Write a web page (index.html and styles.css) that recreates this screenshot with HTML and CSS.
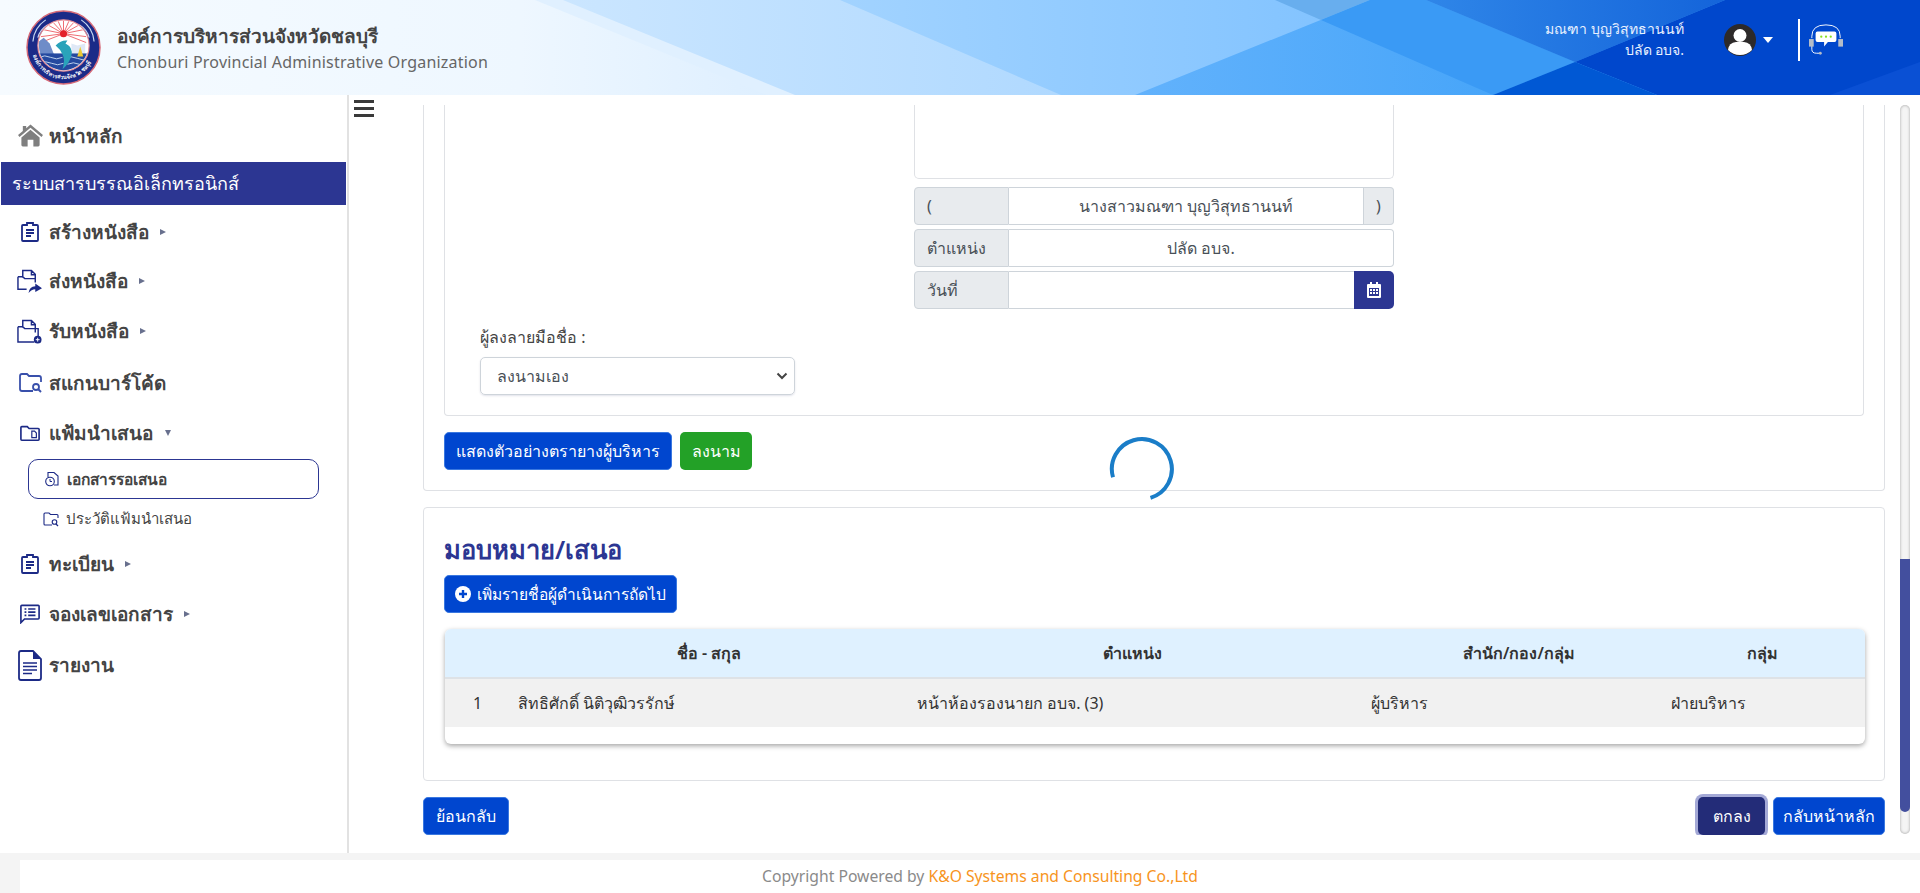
FILE: index.html
```html
<!DOCTYPE html>
<html lang="th">
<head>
<meta charset="utf-8">
<title>ระบบสารบรรณอิเล็กทรอนิกส์</title>
<link rel="stylesheet" href="styles.css">
</head>
<body>
<header class="topbar">
  <svg class="topbar-bg" viewBox="0 0 1920 95" preserveAspectRatio="none" aria-hidden="true">
    <defs>
      <linearGradient id="g0" gradientUnits="userSpaceOnUse" x1="0" x2="800" y1="0" y2="0">
        <stop offset="0" stop-color="#f6fbff"/>
        <stop offset="0.65" stop-color="#eef7ff"/>
        <stop offset="1" stop-color="#dceeff"/>
      </linearGradient>
      <linearGradient id="g1" gradientUnits="userSpaceOnUse" x1="560" x2="1060" y1="0" y2="0">
        <stop offset="0" stop-color="#cbe6ff"/>
        <stop offset="1" stop-color="#b0d9ff"/>
      </linearGradient>
      <linearGradient id="g2" gradientUnits="userSpaceOnUse" x1="840" x2="1370" y1="0" y2="0">
        <stop offset="0" stop-color="#a2d3ff"/>
        <stop offset="1" stop-color="#80c2ff"/>
      </linearGradient>
      <linearGradient id="g3" gradientUnits="userSpaceOnUse" x1="1135" x2="1500" y1="0" y2="0">
        <stop offset="0" stop-color="#62b2fc"/>
        <stop offset="1" stop-color="#47a5f9"/>
      </linearGradient>
      <linearGradient id="g4" gradientUnits="userSpaceOnUse" x1="1426" x2="1725" y1="0" y2="0">
        <stop offset="0" stop-color="#2f86e8"/>
        <stop offset="1" stop-color="#1464da"/>
      </linearGradient>
    </defs>
    <rect width="1920" height="95" fill="url(#g0)"/>
    <polygon points="535,0 1920,0 1920,95 767,95" fill="#e0f0ff"/>
    <polygon points="563,0 1920,0 1920,95 795,95" fill="url(#g1)"/>
    <polygon points="840,0 1920,0 1920,95 1061,95" fill="url(#g2)"/>
    <polygon points="1370,0 1920,0 1920,95 1135,95" fill="url(#g3)"/>
    <polygon points="1275,0 1370,0 1321,20" fill="#68aeee"/>
    <polygon points="1370,0 1426,0 1575,62 1493,95 1321,20" fill="#3a9af5"/>
    <polygon points="1426,0 1725,0 1575,62" fill="url(#g4)"/>
    <polygon points="1725,0 1920,0 1920,95 1657,95 1575,62" fill="#0047cc"/>
    <polygon points="1575,62 1657,95 1493,95" fill="#0058d4"/>
    <polygon points="1830,95 1920,62 1920,95" fill="#0a50d4"/>
  </svg>
  <div class="brand">
    <svg class="logo" viewBox="0 0 76 76" aria-hidden="true">
      <defs>
        <clipPath id="logoInner"><circle cx="38" cy="36" r="25"/></clipPath>
        <path id="logoArc" d="M7 44 A31.500 31.500 0 0 0 69 44"/>
      </defs>
      <circle cx="38" cy="38" r="37" fill="#1b2b88" stroke="#d66a78" stroke-width="1.500"/>
      <path d="M7 32 Q8 18 20 10 M12 28 Q14 20 22 15 M69 32 Q68 18 56 10 M64 28 Q62 20 54 15" fill="none" stroke="#c9d9f2" stroke-width="1.200"/>
      <circle cx="38" cy="36" r="26" fill="#fff" stroke="#e58c96" stroke-width="1.200"/>
      <g clip-path="url(#logoInner)">
        <path d="M38 24 L38 10 M38 24 L32 10 M38 24 L44 10 M38 24 L27 12 M38 24 L49 12 M38 24 L22 15 M38 24 L54 15 M38 24 L18 20 M38 24 L58 20 M38 24 L15 27 M38 24 L61 27 M38 24 L15 33 M38 24 L61 33" stroke="#ec5a62" stroke-width="0.900"/>
        <circle cx="38" cy="24" r="3.600" fill="#e3202a"/>
        <path d="M10 34 L18 28 L24 34 L28 44 L28 62 L10 62Z" fill="#6f8cc8"/>
        <path d="M46 34 L52 36 L60 34 L60 44 L46 44Z" fill="#dfe8f6"/>
        <rect x="10" y="44" width="56" height="20" fill="#25499f"/>
        <path d="M13 48 Q19 45 25 48 T37 48 M40 49 Q46 46 52 49 T63 49 M14 54 Q20 51 26 54 T38 54 M42 55 Q48 52 54 55 T62 55" fill="none" stroke="#cfe0f6" stroke-width="0.900"/>
        <path d="M52 47 L55 37 L58 47Z" fill="#ecc934"/>
        <path d="M30 36 Q36 30 42 31 L40 34 Q48 38 46 46 Q44 54 37 60 Q40 50 37 45 Q35 40 30 36Z" fill="#2aa3ba"/>
      </g>
      <text class="logo-ring" fill="#fff"><textPath href="#logoArc" startOffset="2%">องค์การบริหารส่วนจังหวัดชลบุรี</textPath></text>
    </svg>
    <div class="brand-text">
      <div class="brand-th">องค์การบริหารส่วนจังหวัดชลบุรี</div>
      <div class="brand-en">Chonburi Provincial Administrative Organization</div>
    </div>
  </div>
  <div class="userbox">
    <div class="user-text">
      <div>มณฑา บุญวิสุทธานนท์</div>
      <div>ปลัด อบจ.</div>
    </div>
    <svg class="avatar" viewBox="0 0 32 32" aria-hidden="true">
      <circle cx="16" cy="16" r="16" fill="#2d2a2a"/>
      <circle cx="16" cy="11.500" r="6.500" fill="#fff"/>
      <path d="M4 26 Q5 18.500 12 18 L20 18 Q27 18.500 28 26 Q23 31 16 31 Q9 31 4 26Z" fill="#fff"/>
    </svg>
    <span class="caret"></span>
    <span class="divider"></span>
    <svg class="chat" viewBox="0 0 36 36" aria-hidden="true">
      <path d="M3 16 V14 Q3 2 18 2 Q33 2 33 14 V16" fill="none" stroke="#fff" stroke-width="1"/>
      <path d="M3 24 V28 Q3 32 8 32 H11" fill="none" stroke="#fff" stroke-width="1"/>
      <rect x="0" y="17" width="5" height="8" fill="#b4bcc8"/>
      <rect x="31" y="17" width="5" height="8" fill="#b4bcc8"/>
      <circle cx="12" cy="32" r="1.500" fill="#b4bcc8"/>
      <path d="M9 9 H27 Q29 9 29 11 V18 Q29 20 27 20 H20 L16 25 V20 H9 Q7 20 7 18 V11 Q7 9 9 9Z" fill="#fff"/>
      <circle cx="13" cy="14.500" r="1.200" fill="#86e020"/>
      <circle cx="18" cy="14.500" r="1.200" fill="#86e020"/>
      <circle cx="23" cy="14.500" r="1.200" fill="#86e020"/>
    </svg>
  </div>
</header>

<div class="shell">
  <aside class="sidebar">
    <nav class="menu">
      <a class="item item-home">
        <svg class="ic ic-home" viewBox="0 0 26 24"><path d="M13 0.500 L26 11.500 L24.500 13.500 L13 4 L1.500 13.500 L0 11.500 L5 7.300 V2 H8.500 V4.500Z" fill="#7f7f7f"/><path d="M13 6 L22.500 14 V22 Q22.500 23.500 21 23.500 H16 V16.500 H10 V23.500 H5 Q3.500 23.500 3.500 22 V14Z" fill="#7f7f7f"/></svg>
        <span>หน้าหลัก</span>
      </a>
      <div class="section">ระบบสารบรรณอิเล็กทรอนิกส์</div>
      <a class="item it-create">
        <svg class="ic" viewBox="0 0 20 20"><path d="M3 3 H7 V1 H13 V3 H17 Q18 3 18 4 V18 Q18 19 17 19 H3 Q2 19 2 18 V4 Q2 3 3 3Z M6 8 H14 M6 11 H14 M6 14 H11" fill="none" stroke="#1c2a86" stroke-width="1.800"/></svg>
        <span>สร้างหนังสือ</span><i class="tri"></i>
      </a>
      <a class="item it-send">
        <svg class="ic ic-big" viewBox="0 0 26 26"><path d="M6 9 V1.500 H15 L19 5.500 V14 M15 1.500 V6 H19 M1 8 H6 L8 10 H19 M1 8 V21 H10" fill="none" stroke="#1c2a86" stroke-width="1.500"/><path d="M12 25 Q13 18 19 18 V15 L26 20 L19 24 V21 Q15 21 12 25Z" fill="#1c2a86"/></svg>
        <span>ส่งหนังสือ</span><i class="tri"></i>
      </a>
      <a class="item it-recv">
        <svg class="ic ic-big" viewBox="0 0 26 26"><path d="M6 9 V1.500 H15 L19 5.500 V14 M15 1.500 V6 H19 M1 8 H6 L8 10 H22 V19 M1 8 V24 H18" fill="none" stroke="#1c2a86" stroke-width="1.500"/><circle cx="21.500" cy="21.500" r="4" fill="#1c2a86"/><path d="M19.500 21.500 H23.500 M21.500 19.500 V23.500" stroke="#fff" stroke-width="1"/></svg>
        <span>รับหนังสือ</span>
        <i class="tri"></i>
      </a>
      <a class="item it-scan">
        <svg class="ic ic-scan" viewBox="0 0 24 20"><path d="M14 18 H3 Q1 18 1 16 V3 Q1 1 3 1 H8 L10 3 H20 Q22 3 22 5 V9" fill="none" stroke="#3950ab" stroke-width="1.800"/><circle cx="17" cy="14" r="3" fill="none" stroke="#3950ab" stroke-width="1.800"/><path d="M19 16 L22 19" stroke="#3950ab" stroke-width="2"/></svg>
        <span>สแกนบาร์โค้ด</span>
      </a>
      <a class="item it-folder">
        <svg class="ic" viewBox="0 0 22 18"><path d="M2 2 H8 L10 4 H20 Q21 4 21 5 V16 Q21 17 20 17 H2 Q1 17 1 16 V3 Q1 2 2 2Z" fill="none" stroke="#1c2a86" stroke-width="1.800"/><path d="M13 7 H16 L18 9 V14 H13Z" fill="none" stroke="#1c2a86" stroke-width="1.300"/></svg>
        <span>แฟ้มนำเสนอ</span><i class="tri tri-down"></i>
      </a>
      <a class="sub sub-active">
        <svg class="ic-sub" viewBox="0 0 16 16"><path d="M4 6 V1.500 H10 L14 5 V14 H10" fill="none" stroke="#1c2a86" stroke-width="1.100"/><circle cx="6" cy="10.500" r="4.300" fill="none" stroke="#1c2a86" stroke-width="1.100"/><path d="M6 8 V10.500 H8" fill="none" stroke="#1c2a86" stroke-width="1"/></svg>
        <span>เอกสารรอเสนอ</span>
      </a>
      <a class="sub sub-plain">
        <svg class="ic-sub" viewBox="0 0 16 16"><path d="M9 14 H2 Q1 14 1 13 V3 Q1 2 2 2 H6 L7.500 3.500 H14 Q15 3.500 15 4.500 V7" fill="none" stroke="#1c2a86" stroke-width="1.100"/><circle cx="11.500" cy="11" r="2.300" fill="none" stroke="#1c2a86" stroke-width="1.100"/><path d="M13 13 L15 15" stroke="#1c2a86" stroke-width="1.200"/></svg>
        <span>ประวัติแฟ้มนำเสนอ</span>
      </a>
      <a class="item it-reg">
        <svg class="ic" viewBox="0 0 20 20"><path d="M3 3 H7 V1 H13 V3 H17 Q18 3 18 4 V18 Q18 19 17 19 H3 Q2 19 2 18 V4 Q2 3 3 3Z M6 8 H14 M6 11 H14 M6 14 H11" fill="none" stroke="#1c2a86" stroke-width="1.800"/></svg>
        <span>ทะเบียน</span><i class="tri"></i>
      </a>
      <a class="item it-book">
        <svg class="ic" viewBox="0 0 22 21"><path d="M2 1 H20 Q21 1 21 2 V15 Q21 16 20 16 H5 L1 20 V2 Q1 1 2 1Z" fill="none" stroke="#1c2a86" stroke-width="1.800"/><path d="M5 5 H7 M9 5 H17 M5 8.500 H7 M9 8.500 H17 M5 12 H7 M9 12 H17" stroke="#1c2a86" stroke-width="1.800"/></svg>
        <span>จองเลขเอกสาร</span><i class="tri"></i>
      </a>
      <a class="item it-report">
        <svg class="ic ic-tall" viewBox="0 0 24 31"><path d="M3 1 H15 L23 9 V28 Q23 30 21 30 H3 Q1 30 1 28 V3 Q1 1 3 1Z" fill="#fff" stroke="#1c2a86" stroke-width="1.800"/><path d="M15 1 L23 9 H15Z" fill="#1c2a86"/><path d="M5 13 H19 M5 16.500 H19 M5 20 H19 M5 23.500 H14" stroke="#1c2a86" stroke-width="1.500"/></svg>
        <span>รายงาน</span>
      </a>
    </nav>
  </aside>

  <main class="main">
    <div class="toolrail">
      <svg class="burger" viewBox="0 0 20 17" aria-hidden="true"><path d="M0 1.500 H20 M0 8.500 H20 M0 15.500 H20" stroke="#3a3a3a" stroke-width="3"/></svg>
    </div>
    <div class="scroller">
      <div class="content">
        <section class="card card-sign">
          <div class="inner">
            <div class="signbox">
              <div class="sign-pad"></div>
              <div class="igroup igroup-first">
                <div class="ilabel">(</div>
                <div class="ifield">นางสาวมณฑา บุญวิสุทธานนท์</div>
                <div class="iend">)</div>
              </div>
              <div class="igroup">
                <div class="ilabel">ตำแหน่ง</div>
                <div class="ifield">ปลัด อบจ.</div>
              </div>
              <div class="igroup">
                <div class="ilabel">วันที่</div>
                <div class="ifield"></div>
                <div class="icalbtn">
                  <svg viewBox="0 0 14 16" width="14" height="16" aria-hidden="true"><path d="M3 0 H5 V2 H9 V0 H11 V2 H13 Q14 2 14 3 V15 Q14 16 13 16 H1 Q0 16 0 15 V3 Q0 2 1 2 H3Z" fill="#fff"/><path d="M2 6 H12 V14 H2Z" fill="#2c3692"/><path d="M3 7 H5 V9 H3Z M6 7 H8 V9 H6Z M9 7 H11 V9 H9Z M3 10 H5 V12 H3Z M6 10 H8 V12 H6Z M9 10 H11 V12 H9Z" fill="#fff"/></svg>
                </div>
              </div>
            </div>
            <div class="signer">
              <label class="signer-label">ผู้ลงลายมือชื่อ :</label>
              <div class="fake-select">
                <span>ลงนามเอง</span>
                <svg viewBox="0 0 12 8" width="12" height="8" aria-hidden="true"><path d="M1.500 1.500 L6 6 L10.500 1.500" fill="none" stroke="#444" stroke-width="2"/></svg>
              </div>
            </div>
          </div>
          <div class="actions">
            <button class="btn btn-blue btn-preview">แสดงตัวอย่างตรายางผู้บริหาร</button>
            <button class="btn btn-green">ลงนาม</button>
          </div>
        </section>

        <section class="card card-assign">
          <h2 class="assign-title">มอบหมาย/เสนอ</h2>
          <button class="btn btn-blue btn-add">
            <svg viewBox="0 0 16 16" width="16" height="16" aria-hidden="true"><circle cx="8" cy="8" r="8" fill="#fff"/><path d="M8 4 V12 M4 8 H12" stroke="#0046cf" stroke-width="2.400"/></svg>
            <span>เพิ่มรายชื่อผู้ดำเนินการถัดไป</span>
          </button>
          <div class="tablewrap">
            <table class="tbl">
              <colgroup>
                <col class="c1"><col class="c2"><col class="c3"><col class="c4"><col class="c5">
              </colgroup>
              <thead>
                <tr><th></th><th class="th-name">ชื่อ - สกุล</th><th>ตำแหน่ง</th><th class="th-dept">สำนัก/กอง/กลุ่ม</th><th>กลุ่ม</th></tr>
              </thead>
              <tbody>
                <tr><td class="num">1</td><td>สิทธิศักดิ์ นิติวุฒิวรรักษ์</td><td>หน้าห้องรองนายก อบจ. (3)</td><td>ผู้บริหาร</td><td>ฝ่ายบริหาร</td></tr>
              </tbody>
            </table>
          </div>
        </section>

        <div class="bottom-actions">
          <button class="btn btn-blue">ย้อนกลับ</button>
          <div class="bottom-right">
            <button class="btn btn-navy">ตกลง</button>
            <button class="btn btn-blue btn-home">กลับหน้าหลัก</button>
          </div>
        </div>
      </div>
      <svg class="spinner" viewBox="0 0 66 66" aria-hidden="true"><path d="M4 41.300 A30 30 0 1 1 41.500 61.800" fill="none" stroke="#1a7dc8" stroke-width="4"/></svg>
      <div class="scrolltrack"><div class="scrollthumb"></div></div>
    </div>
  </main>
</div>

<footer class="footer">
  <div class="footer-inner">Copyright Powered by <span class="co">K&amp;O Systems and Consulting Co.,Ltd</span></div>
</footer>
</body>
</html>
```
FILE: styles.css
```css
* { box-sizing: border-box; }
html, body { margin: 0; height: 100%; overflow: hidden; }
body {
  height: 893px;
  display: flex;
  flex-direction: column;
  background: #fff;
  color: #333;
  font-family: "Noto Sans", "Open Sans", "DejaVu Sans", sans-serif;
  font-size: 16px;
}

/* Top bar */
.topbar {
  position: relative;
  height: 95px;
  flex: none;
  display: flex;
  align-items: center;
  justify-content: space-between;
  overflow: hidden;
}
.topbar-bg { position: absolute; inset: 0; width: 100%; height: 100%; }
.brand { position: relative; display: flex; align-items: center; margin-left: 26px; gap: 16px; }
.logo { width: 75px; height: 75px; }
.logo-ring { font-size: 5.500px; font-weight: 600; font-family: "Noto Sans", sans-serif; }
.brand-th { font-size: 19px; font-weight: 600; color: #444; line-height: 28px; }
.brand-en { font-size: 16px; color: #666; line-height: 24px; letter-spacing: .2px; }
.userbox { position: relative; display: flex; align-items: center; margin: 0 77px 15px 0; }
.user-text { text-align: right; color: #e9f1ff; font-size: 14px; line-height: 21px; margin: -2px 40px 0 0; }
.avatar { width: 32px; height: 32px; }
.caret { width: 0; height: 0; border: 5px solid transparent; border-top: 6px solid #fff; border-bottom: 0; margin: 0 0 0 7px; }
.divider { width: 2px; height: 42px; background: #fff; margin-left: 25px; }
.chat { width: 34px; height: 34px; margin-left: 9px; }

/* Shell */
.shell { flex: 1; display: flex; min-height: 0; }
.sidebar { width: 349px; flex: none; border-right: 2px solid #e2e2e2; background: #fff; }
.menu { display: flex; flex-direction: column; }
.item, .sub { display: flex; align-items: center; color: #444; }
.item { font-size: 19px; font-weight: 600; height: 50px; padding-left: 20px; white-space: nowrap; }
.item .ic { width: 20px; height: 20px; margin-right: 9px; flex: none; }
.item .ic-home { width: 25px; height: 23px; margin-left: -2px; margin-right: 6px; }
.item .ic-big { width: 25px; height: 25px; margin-left: -3px; margin-right: 7px; }
.item .ic-scan { width: 24px; margin-left: -1px; margin-right: 6px; }
.item .ic-tall { width: 24px; height: 31px; margin-left: -2px; margin-right: 7px; }
.tri { width: 0; height: 0; border-left: 6px solid #68708e; border-top: 3.500px solid transparent; border-bottom: 3.500px solid transparent; margin-left: 11px; }
.tri-down { border-left: 3.500px solid transparent; border-right: 3.500px solid transparent; border-top: 6px solid #68708e; border-bottom: 0; margin-left: 12px; }
.section {
  height: 43px;
  margin: 2px 1px;
  padding-left: 11px;
  background: #2c3692;
  color: #fff;
  font-size: 18px;
  line-height: 43px;
  font-weight: 500;
  white-space: nowrap;
}
.item-home { height: 49px; margin-top: 16px; }
.it-send { margin-top: -1px; }
.it-scan { margin-top: 2px; }
.it-report { margin-top: 1px; }
.sub { font-size: 15px; margin-left: 28px; padding-left: 15px; width: 291px; height: 40px; }
.sub-active { border: 1px solid #2c3692; border-radius: 10px; font-weight: 600; font-size: 15.500px; margin-top: 1px; }
.ic-sub { width: 16px; height: 16px; margin-right: 7px; }

/* Main */
.main { flex: 1; position: relative; min-width: 0; display: flex; }
.toolrail { width: 74px; flex: none; padding: 5px 0 0 5px; }
.burger { width: 20px; height: 17px; display: block; }
.scroller { position: relative; flex: 1; margin-top: 10px; height: 730px; overflow: hidden; display: flex; }
.content { width: 1462px; flex: none; display: flex; flex-direction: column; }

.card { border: 1px solid #dfe1e5; border-radius: 4px; background: #fff; }
.card-sign { border-top: 0; border-radius: 0 0 4px 4px; height: 386px; padding: 0 20px 0 20px; }
.inner { height: 311px; border: 1px solid #dfe1e5; border-top: 0; border-radius: 0 0 4px 4px; position: relative; }
.signbox { width: 480px; margin-left: 469px; }
.sign-pad { height: 74px; border: 1px solid #dfe1e5; border-top: 0; border-radius: 0 0 5px 5px; margin-bottom: 8px; }
.igroup { display: flex; height: 38px; margin-bottom: 4px; font-size: 16px; }
.ilabel { width: 95px; flex: none; background: #e8ebee; border: 1px solid #ced4da; border-radius: 4px 0 0 4px; padding-left: 12px; line-height: 36px; color: #495057; }
.ifield { flex: 1; border: 1px solid #ced4da; border-left: 0; text-align: center; line-height: 36px; color: #495057; background: #fff; border-radius: 0 4px 4px 0; }
.igroup-first .ifield { border-radius: 0; }
.iend { width: 30px; flex: none; background: #e8ebee; border: 1px solid #ced4da; border-left: 0; border-radius: 0 4px 4px 0; text-align: center; line-height: 36px; color: #495057; }
.igroup:last-child .ifield { border-radius: 0; border-right: 0; }
.icalbtn { width: 40px; flex: none; background: #2c3692; border-radius: 0 5px 5px 0; display: flex; align-items: center; justify-content: center; }
.signer { position: absolute; left: 35px; top: 218px; width: 315px; }
.signer-label { display: block; font-size: 16px; line-height: 28px; color: #444; }
.fake-select {
  margin-top: 6px;
  height: 38px;
  border: 1px solid #ced4da;
  border-radius: 5px;
  padding: 0 6px 0 16px;
  display: flex;
  align-items: center;
  justify-content: space-between;
  color: #495057;
  box-shadow: 0 1px 2px rgba(60,70,120,.15);
}
.actions { display: flex; gap: 8px; margin-top: 16px; }
.btn {
  height: 38px;
  border: 1px solid transparent;
  border-radius: 5px;
  padding: 0 12px;
  font: inherit;
  font-size: 16px;
  font-weight: 500;
  color: #fff;
  display: inline-flex;
  align-items: center;
  justify-content: center;
  flex: none;
  white-space: nowrap;
}
.btn-blue { background: #0046cf; border-color: #3a78e0; }
.btn-preview { padding: 0 11px; }
.btn-green { background: #23a127; width: 72px; padding: 0; }
.btn-navy { background: #232c78; box-shadow: 0 0 0 3px #a4a9d6; width: 67px; padding: 0; }
.btn-home { width: 112px; padding: 0; }

.card-assign { margin-top: 16px; height: 274px; padding: 0 19px 0 21px; }
.assign-title { margin: 23px 0 0 -1px; font-size: 25.500px; line-height: 36px; font-weight: 600; color: #2c3692; }
.btn-add { margin: 8px 0 0 -1px; gap: 6px; padding: 0 10px; font-size: 15.500px; }
.tablewrap { margin-top: 16px; height: 115px; border-radius: 6px; background: #fff; box-shadow: 0 2px 5px rgba(0,0,0,.35); overflow: hidden; }
.tbl { width: 100%; border-collapse: collapse; table-layout: fixed; font-size: 16px; color: #333; }
.c1 { width: 61px; } .c2 { width: 399px; } .c3 { width: 454px; } .c4 { width: 300px; } .c5 { width: 206px; }
.tbl th { height: 49px; background: #dff1ff; border-bottom: 2px solid #dee2e6; font-weight: 600; text-align: center; padding: 0; }
.tbl .th-name { padding-left: 7px; }
.tbl .th-dept { padding-left: 20px; }
.tbl td { height: 49px; background: #f1f1f1; padding: 0 0 0 12px; }
.tbl td.num { text-align: center; padding: 0 0 0 4px; }

.bottom-actions { display: flex; justify-content: space-between; margin-top: 16px; height: 38px; }
.bottom-right { display: flex; gap: 8px; }

.spinner { position: absolute; left: 686px; top: 331px; width: 66px; height: 66px; }

.scrolltrack { position: absolute; left: 1477px; top: 0; width: 10px; height: 729px; border-radius: 5px; background: #f4f4f4; box-shadow: inset 0 0 3px rgba(0,0,0,.35); }
.scrollthumb { position: absolute; left: 0; top: 454px; width: 10px; height: 253px; border-radius: 0 0 5px 5px; background: #434f9e; }

/* Footer */
.footer { height: 40px; flex: none; background: #f4f4f4; padding: 7px 0 0 20px; }
.footer-inner { height: 33px; background: #fff; text-align: center; font-size: 15.700px; color: #8a8a8a; line-height: 32px; padding-left: 20px; }
.co { color: #f7941d; }
```
